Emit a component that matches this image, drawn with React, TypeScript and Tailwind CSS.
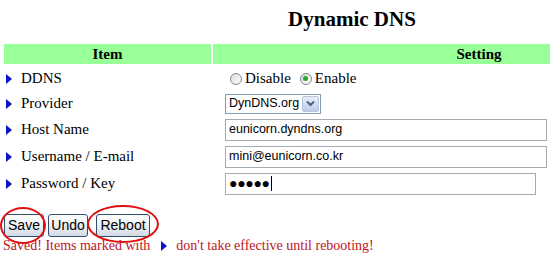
import React from 'react';

const serif = "font-['Liberation_Serif','Times_New_Roman',serif]";
const sans = "font-['Liberation_Sans',Arial,sans-serif]";

const Arrow = () => (
  <svg width="8" height="10" viewBox="0 0 8 10" className="shrink-0">
    <polygon points="1,0 7,5 1,10" fill="#0a14c8" />
  </svg>
);

const Radio = ({ checked }: { checked?: boolean }) => (
  <span className="inline-flex items-center justify-center w-[12px] h-[12px] rounded-full border border-[#7a8a99] bg-gradient-to-br from-[#dcdcd6] to-white">
    {checked && <span className="w-[5px] h-[5px] rounded-full bg-[#2fa52f]" />}
  </span>
);

const rows = ['DDNS', 'Provider', 'Host Name', 'Username / E-mail', 'Password / Key'];

const TextBox = ({ value, width }: { value: React.ReactNode; width: string }) => (
  <div
    className={`h-[22px] ${width} border border-[#a5acb2] bg-white flex items-center px-[3px] text-[12.5px] text-black font-['Liberation_Sans',Arial,sans-serif]`}
  >
    {value}
  </div>
);

const Btn = ({ label, width }: { label: string; width: string }) => (
  <button
    className={`h-[23px] ${width} rounded-[3px] border border-[#2f5070] bg-gradient-to-b from-white via-[#eef0f4] to-[#d4d8e2] text-[14px] text-black font-['Liberation_Sans',Arial,sans-serif]`}
  >
    {label}
  </button>
);

export default function App() {
  return (
    <div className={`relative w-[550px] h-[257px] overflow-hidden bg-white text-black ${serif}`}>
      <div className="w-[745px]">
        <h1 className={`w-[704px] text-center text-[21px] font-bold leading-none pt-[9px] ${serif}`}>Dynamic DNS</h1>

        <div className={`mt-[14px] ml-[4px] flex gap-[2px] h-[20px] text-[15px] font-bold ${serif}`}>
          <div className="w-[207px] bg-[#99ff99] flex items-center justify-center">Item</div>
          <div className="w-[532px] bg-[#99ff99] flex items-center justify-center">Setting</div>
        </div>

        <div className="ml-[4px] mt-[2px] flex">
          <div className="w-[209px] flex flex-col text-[15px]">
            {rows.map((r, i) => (
              <div
                key={r}
                className={`flex items-center gap-[8px] pl-[1px] ${i < 2 ? 'h-[25px]' : 'h-[27px]'}`}
              >
                <Arrow />
                <span className={serif}>{r}</span>
              </div>
            ))}
          </div>
          <div className="flex flex-col pl-[12px]">
            <div className={`h-[25px] flex items-center gap-[3px] pl-[5px] text-[15px] ${serif}`}>
              <Radio />
              <span className="mr-[6px]">Disable</span>
              <Radio checked />
              <span>Enable</span>
            </div>
            <div className="h-[25px] flex items-center">
              <div className={`h-[20px] w-[96px] border border-[#7f9db9] bg-white flex items-center text-[12.5px] ${sans}`}>
                <span className="flex-1 pl-[3px]">DynDNS.org</span>
                <span className="w-[17px] h-[16px] mr-[1px] rounded-[2px] border border-[#b8c4d8] bg-gradient-to-b from-[#e8eefc] to-[#bccbea] flex items-center justify-center">
                  <svg width="9" height="7" viewBox="0 0 9 7">
                    <polyline points="1,1.5 4.5,5 8,1.5" fill="none" stroke="#4d6185" strokeWidth="2" />
                  </svg>
                </span>
              </div>
            </div>
            <div className="h-[27px] flex items-center">
              <TextBox value="eunicorn.dyndns.org" width="w-[322px]" />
            </div>
            <div className="h-[27px] flex items-center">
              <TextBox value="mini@eunicorn.co.kr" width="w-[322px]" />
            </div>
            <div className="h-[27px] flex items-center">
              <TextBox
                width="w-[311px]"
                value={
                  <span className="flex items-center">
                    <span className="tracking-[-0.3px] text-[14px]">●●●●●</span>
                    <span className="ml-[1px] w-[1px] h-[15px] bg-black" />
                  </span>
                }
              />
            </div>
          </div>
        </div>

        <div className="mt-[17px] ml-[4px] flex items-center">
          <Btn label="Save" width="w-[40px]" />
          <span className="w-[4px]" />
          <Btn label="Undo" width="w-[40px]" />
          <span className="w-[8px]" />
          <Btn label="Reboot" width="w-[54px]" />
        </div>

        <div className={`ml-[3px] flex items-center text-[14px] leading-[18px] text-[#c0141c] ${serif}`}>
          <span>Saved! Items marked with</span>
          <span className="ml-[10px] mr-[8px] flex">
            <Arrow />
          </span>
          <span>don't take effective until rebooting!</span>
        </div>
      </div>

      <div className="absolute left-[0px] top-[207px] w-[46px] h-[37px] rounded-[50%] border-2 border-[#e01010]" />
      <div className="absolute left-[87px] top-[205px] w-[72px] h-[38px] rounded-[50%] border-2 border-[#e01010]" />
    </div>
  );
}
